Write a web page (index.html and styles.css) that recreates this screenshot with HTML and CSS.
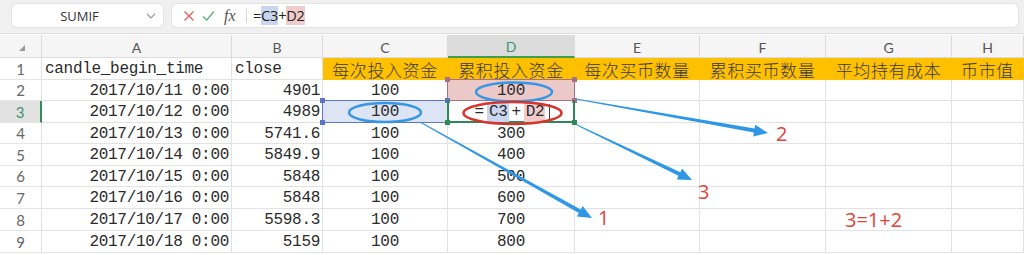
FILE: index.html
```html
<!DOCTYPE html>
<html lang="zh-CN">
<head>
  <meta charset="UTF-8">
  <meta name="viewport" content="width=device-width, initial-scale=1.0">
  <title>定投表</title>
  <link rel="stylesheet" href="styles.css">
</head>
<body>
  <div class="app">
    <!-- Formula bar -->
    <div class="toolbar">
      <div class="namebox">
        <span>SUMIF</span>
        <svg class="chev" width="10" height="6" viewBox="0 0 10 6"><path d="M1 1 L5 5 L9 1" fill="none" stroke="#999" stroke-width="1.2"/></svg>
      </div>
      <div class="formula">
        <svg class="f-icon" width="12" height="12" viewBox="0 0 12 12"><path d="M1.5 1.5 L10.5 10.5 M10.5 1.5 L1.5 10.5" stroke="#e0625c" stroke-width="1.4" fill="none"/></svg>
        <svg class="f-icon" width="13" height="12" viewBox="0 0 13 12"><path d="M1 6.5 L4.8 10 L12 1.5" stroke="#5fae7a" stroke-width="1.4" fill="none"/></svg>
        <span class="f-fx">fx</span>
        <span class="f-sep"></span>
        <span class="f-text">=<span class="ref-c">C3</span>+<span class="ref-d">D2</span></span>
      </div>
    </div>

    <!-- Sheet grid -->
    <div class="sheet">
      <div class="corner"><span class="tri"></span></div>
      <div class="ch">A</div>
      <div class="ch">B</div>
      <div class="ch">C</div>
      <div class="ch ch-on">D</div>
      <div class="ch">E</div>
      <div class="ch">F</div>
      <div class="ch">G</div>
      <div class="ch">H</div>

      <div class="rh">1</div>
      <div class="c left">candle_begin_time</div>
      <div class="c left">close</div>
      <div class="c hd">每次投入资金</div>
      <div class="c hd">累积投入资金</div>
      <div class="c hd">每次买币数量</div>
      <div class="c hd">累积买币数量</div>
      <div class="c hd">平均持有成本</div>
      <div class="c hd">币市值</div>

      <div class="rh">2</div>
      <div class="c num">2017/10/11 0:00</div>
      <div class="c num">4901</div>
      <div class="c">100</div>
      <div class="c sel-d">100<i class="h tl"></i><i class="h tr"></i><i class="h bl"></i><i class="h br"></i></div>
      <div class="c"></div>
      <div class="c"></div>
      <div class="c"></div>
      <div class="c"></div>

      <div class="rh rh-on">3</div>
      <div class="c num">2017/10/12 0:00</div>
      <div class="c num">4989</div>
      <div class="c sel-c">100<i class="h tl"></i><i class="h tr"></i><i class="h bl"></i><i class="h br"></i></div>
      <div class="c active"><span class="edit"><span>=</span><span class="ref-c">C3</span><span class="op">+</span><span class="ref-d">D2</span><span class="caret"></span></span><i class="h bl"></i><i class="h br"></i></div>
      <div class="c"></div>
      <div class="c"></div>
      <div class="c"></div>
      <div class="c"></div>

      <div class="rh">4</div>
      <div class="c num">2017/10/13 0:00</div>
      <div class="c num">5741.6</div>
      <div class="c">100</div>
      <div class="c">300</div>
      <div class="c"></div>
      <div class="c"></div>
      <div class="c"></div>
      <div class="c"></div>

      <div class="rh">5</div>
      <div class="c num">2017/10/14 0:00</div>
      <div class="c num">5849.9</div>
      <div class="c">100</div>
      <div class="c">400</div>
      <div class="c"></div>
      <div class="c"></div>
      <div class="c"></div>
      <div class="c"></div>

      <div class="rh">6</div>
      <div class="c num">2017/10/15 0:00</div>
      <div class="c num">5848</div>
      <div class="c">100</div>
      <div class="c">500</div>
      <div class="c"></div>
      <div class="c"></div>
      <div class="c"></div>
      <div class="c"></div>

      <div class="rh">7</div>
      <div class="c num">2017/10/16 0:00</div>
      <div class="c num">5848</div>
      <div class="c">100</div>
      <div class="c">600</div>
      <div class="c"></div>
      <div class="c"></div>
      <div class="c"></div>
      <div class="c"></div>

      <div class="rh">8</div>
      <div class="c num">2017/10/17 0:00</div>
      <div class="c num">5598.3</div>
      <div class="c">100</div>
      <div class="c">700</div>
      <div class="c"></div>
      <div class="c"></div>
      <div class="c"></div>
      <div class="c"></div>

      <div class="rh">9</div>
      <div class="c num">2017/10/18 0:00</div>
      <div class="c num">5159</div>
      <div class="c">100</div>
      <div class="c">800</div>
      <div class="c"></div>
      <div class="c"></div>
      <div class="c"></div>
      <div class="c"></div>
    </div>

    <!-- Hand-drawn annotations on top of the sheet -->
    <svg class="notes" width="1024" height="255" viewBox="0 0 1024 255">
      <ellipse cx="514" cy="92" rx="38" ry="9.5" class="ring-blue"/>
      <ellipse cx="385" cy="112.5" rx="36" ry="9.5" class="ring-blue"/>
      <ellipse cx="512.5" cy="113" rx="49" ry="11" class="ring-red"/>

      <polygon class="arrow" points="575.9,99.5 753.9,132.6 753.2,136.5 768,133 755.2,124.7 754.5,128.6 576.1,98.5"/>
      <polygon class="arrow" points="576.8,125.5 678.5,175.8 676.8,179.4 692,180 682,168.6 680.3,172.2 577.2,124.5"/>
      <polygon class="arrow" points="419.8,122.4 578.8,213 576.9,216.4 592,218 582.7,206 580.8,209.5 420.2,121.6"/>

      <text x="776" y="141" class="mark">2</text>
      <text x="698" y="199" class="mark">3</text>
      <text x="598" y="225" class="mark">1</text>
      <text x="845" y="227" class="mark">3=1+2</text>
    </svg>
  </div>
</body>
</html>
```

FILE: styles.css
```css
/* General */
body {
  margin: 0;
  padding: 0;
  background-color: #fff;
  font-family: "Open Sans", "Noto Sans", sans-serif;
}

.app {
  position: relative;
  width: 1024px;
  height: 255px;
  overflow: hidden;
}

/* Formula bar */
.toolbar {
  height: 34px;
  background-color: #f0f0f0;
  border-bottom: 1px solid #dedede;
  box-sizing: border-box;
  display: flex;
  align-items: flex-start;
  gap: 9px;
  padding: 4px 6px 0 12px;
}

.namebox,
.formula {
  height: 23px;
  background-color: #fff;
  border-radius: 5px;
  box-shadow: 0 0 0 1px #e4e4e4;
  display: flex;
  align-items: center;
}

.namebox {
  width: 151px;
  position: relative;
  justify-content: center;
  font-size: 13px;
  color: #333;
}

.namebox span {
  margin-right: 16px;
}

.chev {
  position: absolute;
  right: 7px;
  top: 9px;
}

.formula {
  flex: 1;
  padding-left: 11px;
  font-size: 14px;
}

.f-icon {
  margin-right: 7px;
}

.f-fx {
  font-family: "Liberation Serif", serif;
  font-style: italic;
  font-size: 16px;
  color: #555;
  width: 22px;
  padding-left: 2px;
}

.f-sep {
  width: 1px;
  height: 15px;
  background-color: #d8d8d8;
  margin-right: 6px;
}

.f-text {
  color: #222;
  font-size: 14.5px;
  letter-spacing: -0.2px;
}

.f-text .ref-c {
  background-color: #c9d6ef;
}

.f-text .ref-d {
  background-color: #f1cccc;
}

/* Sheet */
.sheet {
  display: grid;
  grid-template-columns: 42px 190px 91px 125px 127px 125px 126px 126px 72px;
  grid-template-rows: 23px 22px 21px 22px 21px 22px 21px 22px 22px 22px;
  margin-top: 1px;
}

.corner,
.ch,
.rh {
  background-color: #f5f5f5;
  color: #555;
  font-family: "Lato", "Open Sans", sans-serif;
  font-size: 14px;
  display: flex;
  align-items: center;
  justify-content: center;
  box-sizing: border-box;
}

.corner {
  border-right: 1px solid #dcdcdc;
  border-bottom: 1px solid #dcdcdc;
  position: relative;
}

.tri {
  position: absolute;
  left: 19px;
  top: 10px;
  width: 0;
  height: 0;
  border-left: 6px solid transparent;
  border-bottom: 6px solid #9a9a9a;
}

.ch {
  border-right: 1px solid #dcdcdc;
  border-bottom: 1px solid #dcdcdc;
  padding-top: 2px;
}

.ch-on {
  background-color: #dcdcdc;
  color: #3f9470;
  border-bottom: 2px solid #3f9f4a;
}

.rh {
  background-color: #fff;
  border-right: 1px solid #e0e0e0;
  border-bottom: 1px solid #e6e6e6;
  font-size: 15px;
  color: #666;
}

.rh-on {
  background-color: #e2e2e2;
  color: #3f9470;
  border-right: 2px solid #2f8f5a;
}

.c {
  position: relative;
  border-right: 1px solid #e2e2e2;
  border-bottom: 1px solid #e2e2e2;
  box-sizing: border-box;
  display: flex;
  align-items: center;
  justify-content: center;
  font-family: "Liberation Mono", "Noto Sans CJK SC", monospace;
  font-size: 16px;
  letter-spacing: -0.3px;
  color: #2b2b2b;
  white-space: nowrap;
  padding-top: 1px;
}

.c.left {
  justify-content: flex-start;
  padding-left: 3px;
}

.c.num {
  justify-content: flex-end;
  padding-right: 2px;
}

.c.hd {
  background-color: #ffc000;
  font-family: "Noto Sans CJK SC", sans-serif;
  font-size: 17px;
  font-weight: 300;
  letter-spacing: 0.6px;
  color: #3a3a3a;
  border-right-color: #ffc000;
  border-bottom-color: #ffc000;
}

/* Selected ranges */
.sel-c,
.sel-d,
.active {
  z-index: 1;
}

.sel-c::before,
.sel-d::before,
.active::before {
  content: "";
  position: absolute;
  left: -1px;
  top: -1px;
  right: -1px;
  bottom: -1px;
  z-index: -1;
}

.sel-c::before {
  background-color: #dde4f4;
  border: 1.5px solid #5b75c2;
}

.sel-d::before {
  background-color: #ecc9c9;
  border: 1.5px solid #a87088;
}

.active::before {
  border: 2px solid #2b8a55;
  border-top: none;
}

.edit {
  display: flex;
  align-items: center;
  margin-left: 3px;
}

.edit .ref-c,
.edit .ref-d {
  padding: 0 1px 0 2px;
  line-height: 19px;
}

.edit .ref-c {
  background-color: #c9d6ef;
  margin-left: 3px;
}

.edit .ref-d {
  background-color: #f1cccc;
}

.edit .op {
  margin: 0 3px;
}

.caret {
  display: inline-block;
  width: 1px;
  height: 17px;
  background-color: #444;
  margin-left: 4px;
}

.h {
  position: absolute;
  width: 5px;
  height: 5px;
}

.sel-c .h { background-color: #5b75c2; }
.sel-d .h { background-color: #a87088; }
.active .h { background-color: #2b8a55; }

.h.tl { left: -3px; top: -3px; }
.h.tr { right: -3px; top: -3px; }
.h.bl { left: -3px; bottom: -3px; }
.h.br { right: -3px; bottom: -3px; }

/* Annotations */
.notes {
  position: absolute;
  left: 0;
  top: 0;
  pointer-events: none;
  z-index: 5;
}

.ring-blue {
  fill: none;
  stroke: #3597e4;
  stroke-width: 2.5;
}

.ring-red {
  fill: none;
  stroke: #d9332c;
  stroke-width: 2.5;
}

.arrow {
  fill: #2f98e6;
}

.mark {
  fill: #e0433a;
  font-family: "Open Sans", "Noto Sans", sans-serif;
  font-size: 20px;
}
```
